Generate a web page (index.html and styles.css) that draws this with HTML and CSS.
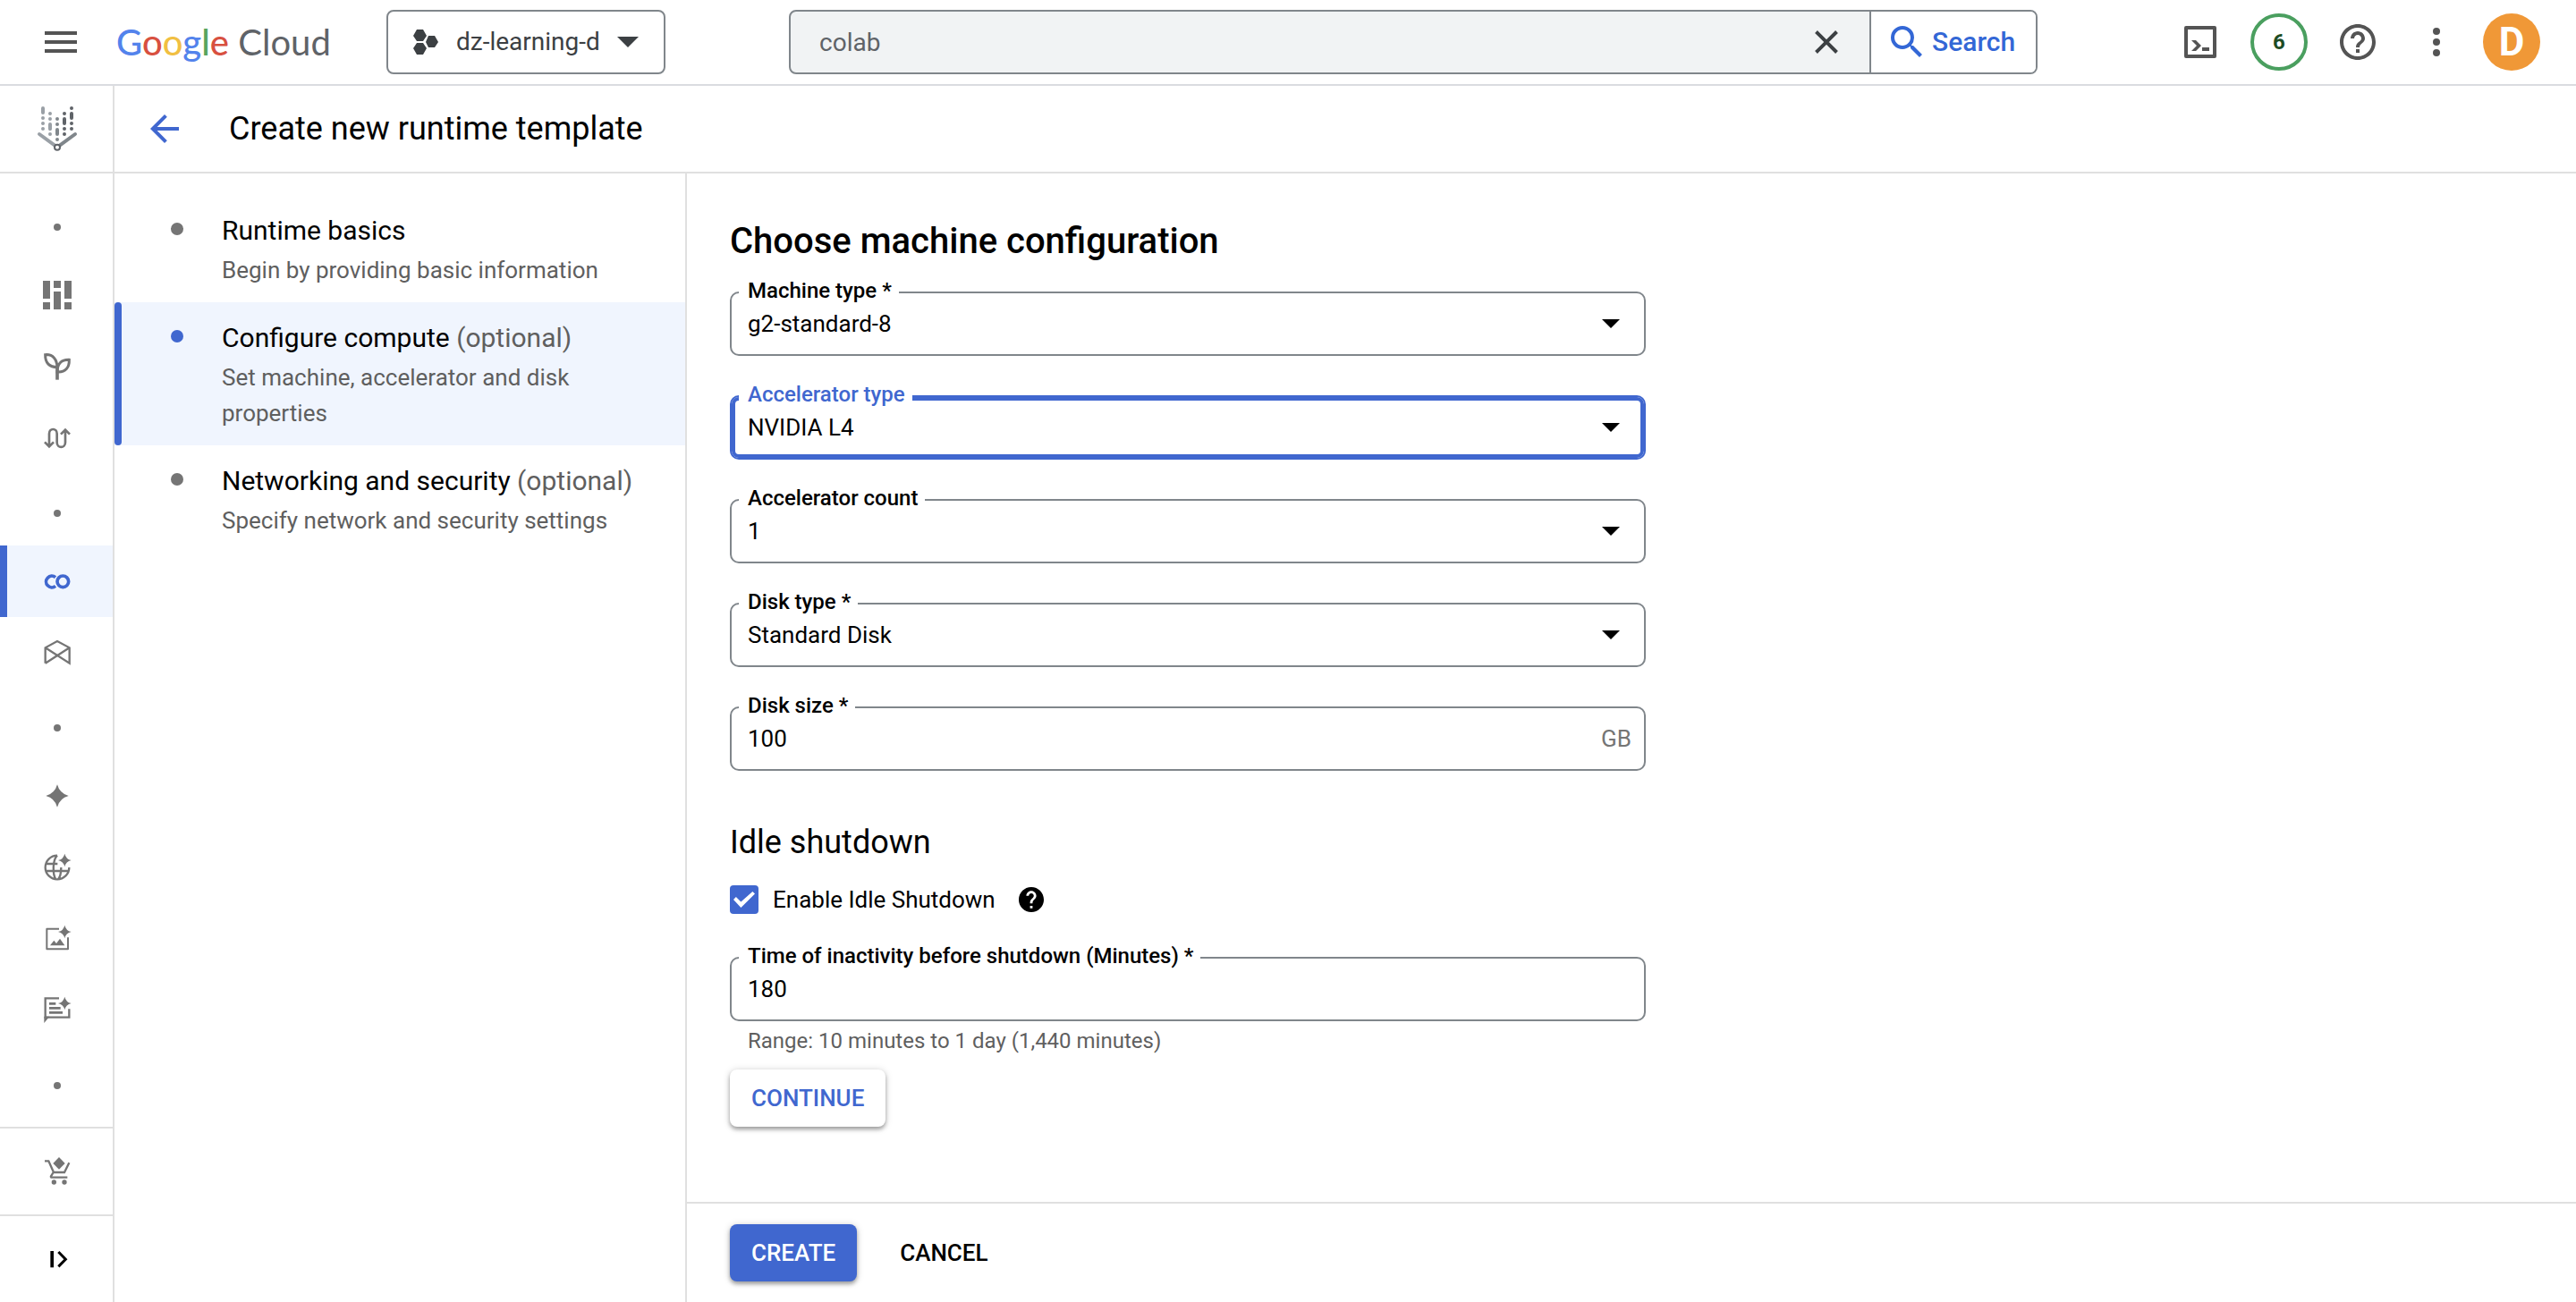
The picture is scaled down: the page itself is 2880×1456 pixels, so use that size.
FILE: index.html
```html
<!DOCTYPE html>
<html lang="en">
<head>
<meta charset="utf-8">
<title>Create new runtime template</title>
<meta name="viewport" content="width=device-width, initial-scale=1">
<link rel="stylesheet" href="styles.css">
</head>
<body>
<header class="topbar">
  <button class="icon-btn menu-btn" type="button" aria-label="Navigation menu">
    <svg class="icon-48" viewBox="0 0 24 24"><path d="M3 18h18v-2H3v2zm0-5h18v-2H3v2zm0-7v2h18V6H3z"/></svg>
  </button>
  <a class="logo" href="#"><span class="logo-google"><span class="g-blue">G</span><span class="g-red">o</span><span class="g-yellow">o</span><span class="g-blue">g</span><span class="g-green">l</span><span class="g-red">e</span></span> <span class="logo-cloud">Cloud</span></a>
  <button class="project" type="button">
    <svg class="project-icon" viewBox="0 0 28 28"><path d="M4 0h7l4 7-4 6H4L0 7zM4 15h7l4 6-4 7H4l-4-7zM17 7h7l4 7-4 6h-7l-3-6z"/></svg>
    <span>dz-learning-d</span>
    <svg class="project-caret" viewBox="0 0 24 12"><path d="M0 0h24L12 12z"/></svg>
  </button>
  <form class="search" role="search">
    <input class="search-input" type="text" value="colab" aria-label="Search">
    <button class="search-clear" type="button" aria-label="Clear search">
      <svg class="icon-32" viewBox="0 0 32 32"><path d="M4.500 4.500l23 23M27.500 4.500l-23 23" fill="none" stroke="currentColor" stroke-width="4"/></svg>
    </button>
    <button class="search-submit" type="button">
      <svg class="icon-48" viewBox="0 0 24 24"><path d="M15.500 14h-.79l-.28-.27A6.470 6.470 0 0 0 16 9.500 6.500 6.500 0 1 0 9.500 16c1.610 0 3.090-.59 4.230-1.570l.27.28v.79l5 4.990L20.490 19l-4.990-5zm-6 0C7.010 14 5 11.990 5 9.500S7.010 5 9.500 5 14 7.010 14 9.500 11.990 14 9.500 14z"/></svg>
      <span>Search</span>
    </button>
  </form>
  <div class="tools">
    <button class="icon-btn" type="button" aria-label="Cloud Shell">
      <svg class="icon-36" viewBox="0 0 36 36"><path d="M2 2h32v32H2z" fill="none" stroke="currentColor" stroke-width="4" stroke-linejoin="round"/><path d="M8 16h5l6 6-6 6H8l6-6zM20 24h8v4h-8z"/></svg>
    </button>
    <button class="notices" type="button">6</button>
    <button class="icon-btn" type="button" aria-label="Help">
      <svg class="icon-48" viewBox="0 0 24 24"><path d="M11 18h2v-2h-2v2zm1-16C6.480 2 2 6.480 2 12s4.480 10 10 10 10-4.480 10-10S17.520 2 12 2zm0 18c-4.410 0-8-3.590-8-8s3.590-8 8-8 8 3.590 8 8-3.590 8-8 8zm0-14c-2.210 0-4 1.790-4 4h2c0-1.100.9-2 2-2s2 .9 2 2c0 2-3 1.750-3 5h2c0-2.250 3-2.500 3-5 0-2.210-1.790-4-4-4z"/></svg>
    </button>
    <button class="icon-btn" type="button" aria-label="More options">
      <svg class="icon-32" viewBox="0 0 32 32"><circle cx="16" cy="4" r="4"/><circle cx="16" cy="16" r="4"/><circle cx="16" cy="28" r="4"/></svg>
    </button>
    <button class="avatar" type="button">D</button>
  </div>
</header>

<div class="shell">
  <nav class="rail" aria-label="Vertex AI">
    <a class="rail-product" href="#" aria-label="Vertex AI">
      <svg class="vertex" viewBox="60 321 144 162" fill="none" stroke-width="12" stroke-linecap="round">
        <path stroke="#9aa0a6" d="M84 333v15M84 366v0M84 384v0M84 402v0M108 351v0M108 369v0M108 387v16M108 420v0M72 420l60 44"/>
        <path stroke="#80868b" d="M132 369v0M132 387v0M132 405v15M132 438v0M192 420l-60 44"/>
        <path stroke="#5f6368" d="M156 351v0M156 369v15M156 402v0M156 420v0M180 333v0M180 351v15M180 384v0M180 402v0"/>
        <circle cx="132" cy="464" r="9" fill="#fff" stroke="#5f6368" stroke-width="6"/>
      </svg>
    </a>
    <div class="rail-list">
      <span class="rail-dot"></span>
      <a class="rail-item" href="#" aria-label="Dashboard"><svg class="icon-40" viewBox="132 360 120 120"><path d="M144 372h24v60h-24zM144 444h24v24h-24zM180 372h24v24h-24zM180 408h24v60h-24zM216 372h24v60h-24zM216 444h24v24h-24z"/></svg></a>
      <a class="rail-item" href="#" aria-label="Model Garden"><svg class="icon-40 line" viewBox="132 600 120 120"><path stroke-width="9" d="M152 620C178 618 191 636 192 662C166 662 151 648 152 620zM232 637C206 636 192 650 192 678C220 680 233 662 232 637z"/><path stroke-width="11" d="M192 656v48"/></svg></a>
      <a class="rail-item" href="#" aria-label="Pipelines"><svg class="icon-40 line" viewBox="132 838 120 120"><path stroke-width="8" d="M165 926V883C165 863 191 863 191 883V912C191 933 219 933 219 912V870M150 911l15 15 15-15M204 885l15-15 15 15"/></svg></a>
      <span class="rail-dot"></span>
      <a class="rail-item is-active" href="#" aria-label="Colab Enterprise"><svg class="icon-40 line" viewBox="132 1322 120 120"><circle cx="211" cy="1383" r="19" stroke-width="11"/><path stroke-width="11" d="M186 1369A19 19 0 1 0 186 1398"/></svg></a>
      <a class="rail-item" href="#" aria-label="Workbench"><svg class="icon-40 line" viewBox="132 90 120 120"><path stroke-width="7" d="M152 185V133L192 111L233 133V185L152 133M152 185L233 133"/></svg></a>
      <span class="rail-dot"></span>
      <a class="rail-item" href="#" aria-label="Overview"><svg class="icon-40" viewBox="132 570 120 120"><path d="M192 592Q200 622 230 630Q200 638 192 668Q184 638 154 630Q184 622 192 592z"/></svg></a>
      <a class="rail-item" href="#" aria-label="Language"><svg class="icon-40" viewBox="132 810 120 120"><path fill="none" stroke="currentColor" stroke-width="7" d="M192 830A40 40 0 1 0 232 870M155 858H193M154 882H231M192 830C176 845 176 893 187 910M205 870C205 886 202 902 195 910"/><path d="M217 824Q221 842 239 846Q221 850 217 868Q213 850 195 846Q213 842 217 824z"/></svg></a>
      <a class="rail-item" href="#" aria-label="Vision"><svg class="icon-40" viewBox="132 1050 120 120"><path fill="none" stroke="currentColor" stroke-width="6" stroke-linejoin="round" d="M198 1076H157V1144H228V1105"/><path d="M168 1132l13-17 8 10 12-16 16 23zM217 1064Q221 1082 239 1086Q221 1090 217 1108Q213 1090 195 1086Q213 1082 217 1064z"/></svg></a>
      <a class="rail-item" href="#" aria-label="Speech"><svg class="icon-40" viewBox="132 1290 120 120"><path fill="none" stroke="currentColor" stroke-width="7" d="M198 1309H152V1373H232V1345"/><path d="M148 1370h18l-18 22zM165 1323h22v8h-22zM165 1338h38v8h-38zM165 1353h45v8h-45zM217 1304Q221 1322 239 1326Q221 1330 217 1348Q213 1330 195 1326Q213 1322 217 1304z"/></svg></a>
      <span class="rail-dot"></span>
    </div>
    <a class="rail-foot" href="#" aria-label="Marketplace"><svg class="icon-40" viewBox="132 360 120 120"><path fill="none" stroke="currentColor" stroke-width="7" d="M150 385h13l17 38h36l16-32M179 423l-8 13q-2 4 4 4h51"/><circle cx="181" cy="456" r="8"/><circle cx="216" cy="456" r="8"/><path d="M198 372l20 21-20 20-20-20z"/></svg></a>
    <button class="rail-foot rail-toggle" type="button" aria-label="Expand menu"><svg class="icon-40" viewBox="132 654 120 120"><path d="M169 687h11v55h-11z"/><path fill="none" stroke="currentColor" stroke-width="9" d="M196 690l24 25-24 24"/></svg></button>
  </nav>

  <div class="page">
    <div class="titlebar">
      <a class="back" href="#" aria-label="Back"><svg class="icon-48" viewBox="0 0 24 24"><path d="M20 11H7.830l5.590-5.590L12 4l-8 8 8 8 1.410-1.410L7.830 13H20v-2z"/></svg></a>
      <h1 class="page-title">Create new runtime template</h1>
    </div>
    <div class="columns">
      <nav class="steps" aria-label="Steps">
        <a class="step" href="#">
          <span class="step-title">Runtime basics</span>
          <span class="step-desc">Begin by providing basic information</span>
        </a>
        <a class="step is-active" href="#">
          <span class="step-title">Configure compute <span class="optional">(optional)</span></span>
          <span class="step-desc">Set machine, accelerator and disk properties</span>
        </a>
        <a class="step" href="#">
          <span class="step-title">Networking and security <span class="optional">(optional)</span></span>
          <span class="step-desc">Specify network and security settings</span>
        </a>
      </nav>
      <main class="main">
        <form class="form">
          <h2 class="form-title">Choose machine configuration</h2>
          <div class="fields">
            <div class="field">
              <label class="field-label" for="machine">Machine type *</label>
              <select class="field-control" id="machine"><option>g2-standard-8</option></select>
              <svg class="field-caret" viewBox="0 0 20 10"><path d="M0 0h20L10 10z"/></svg>
            </div>
            <div class="field is-focused">
              <label class="field-label" for="accel">Accelerator type</label>
              <select class="field-control" id="accel"><option>NVIDIA L4</option></select>
              <svg class="field-caret" viewBox="0 0 20 10"><path d="M0 0h20L10 10z"/></svg>
            </div>
            <div class="field">
              <label class="field-label" for="count">Accelerator count</label>
              <select class="field-control" id="count"><option>1</option></select>
              <svg class="field-caret" viewBox="0 0 20 10"><path d="M0 0h20L10 10z"/></svg>
            </div>
            <div class="field">
              <label class="field-label" for="disk">Disk type *</label>
              <select class="field-control" id="disk"><option>Standard Disk</option></select>
              <svg class="field-caret" viewBox="0 0 20 10"><path d="M0 0h20L10 10z"/></svg>
            </div>
            <div class="field">
              <label class="field-label" for="size">Disk size *</label>
              <input class="field-control" id="size" type="text" value="100">
              <span class="field-unit">GB</span>
            </div>
          </div>
          <h3 class="section-title">Idle shutdown</h3>
          <div class="check-row">
            <input class="check" id="idle" type="checkbox" checked>
            <label for="idle">Enable Idle Shutdown</label>
            <button class="icon-btn hint-btn" type="button" aria-label="About idle shutdown"><svg class="icon-28" viewBox="2 2 20 20"><path d="M12 2C6.480 2 2 6.480 2 12s4.480 10 10 10 10-4.480 10-10S17.520 2 12 2zm1 17h-2v-2h2v2zm2.070-7.750l-.9.920C13.450 12.900 13 13.500 13 15h-2v-.5c0-1.100.45-2.100 1.170-2.830l1.240-1.260c.37-.36.59-.86.59-1.410 0-1.100-.9-2-2-2s-2 .9-2 2H8c0-2.210 1.790-4 4-4s4 1.790 4 4c0 .88-.36 1.680-.93 2.250z"/></svg></button>
          </div>
          <div class="field">
            <label class="field-label" for="time">Time of inactivity before shutdown (Minutes) *</label>
            <input class="field-control" id="time" type="text" value="180">
          </div>
          <p class="field-hint">Range: 10 minutes to 1 day (1,440 minutes)</p>
          <button class="btn btn-raised" type="button">CONTINUE</button>
        </form>
        <div class="actions">
          <button class="btn btn-primary" type="button">CREATE</button>
          <button class="btn btn-text" type="button">CANCEL</button>
        </div>
      </main>
    </div>
  </div>
</div>
</body>
</html>
```

FILE: styles.css
```css
:root {
  --blue: #4067cf;
  --tint: #f0f5fe;
  --line: #e0e0e0;
  --outline: #80868b;
  --muted: #5f5f5f;
}

*, *::before, *::after { box-sizing: border-box; }

body {
  margin: 0;
  min-height: 100vh;
  display: flex;
  flex-direction: column;
  background: #fff;
  color: #000;
  font-family: Roboto, "Liberation Sans", sans-serif;
  font-size: 26px;
  line-height: 32px;
}

h1, h2, h3, p { margin: 0; font-weight: 400; }
a { color: inherit; text-decoration: none; }
button, input, select { font: inherit; color: inherit; margin: 0; }
button { border: 0; padding: 0; background: none; cursor: pointer; }
svg { display: block; flex: none; fill: currentColor; }

.icon-28 { width: 28px; height: 28px; }
.icon-32 { width: 32px; height: 32px; }
.icon-36 { width: 36px; height: 36px; }
.icon-40 { width: 40px; height: 40px; }
.icon-48 { width: 48px; height: 48px; }
.line { fill: none; stroke: currentColor; }
.icon-btn { display: flex; align-items: center; justify-content: center; }

/* Top bar */
.topbar {
  display: flex;
  align-items: center;
  height: 96px;
  padding: 0 40px 0 44px;
  border-bottom: 2px solid #dadce0;
  color: #545454;
}
.logo {
  width: 264px;
  margin: 0 38px;
  flex: none;
  font-family: Lato, "Liberation Sans", sans-serif;
  font-size: 40px;
  line-height: 48px;
  white-space: nowrap;
  color: #5f6368;
}
.logo-google { font-weight: 500; }
.g-blue { color: #5383ec; }
.g-red { color: #d85040; }
.g-yellow { color: #f1bf42; }
.g-green { color: #58a55c; }
.project {
  display: flex;
  align-items: center;
  flex: none;
  width: 312px;
  height: 72px;
  padding: 0 28px;
  border: 2px solid var(--outline);
  border-radius: 8px;
  color: #3c4043;
  font-size: 28px;
}
.project-icon { width: 28px; height: 28px; margin-right: 20px; }
.project-caret { width: 24px; height: 12px; margin-left: auto; }
.search {
  display: flex;
  flex: 0 1 1396px;
  min-width: 0;
  height: 72px;
  margin-left: 138px;
  border: 2px solid var(--outline);
  border-radius: 8px;
  overflow: hidden;
  background: #f1f3f4;
  font-size: 28px;
}
.search-input {
  flex: 1;
  min-width: 0;
  padding: 2px 32px 0;
  border: 0;
  outline: 0;
  background: none;
  color: #5f6368;
}
.search-clear { width: 96px; display: flex; align-items: center; justify-content: center; color: #3c4043; }
.search-submit {
  display: flex;
  align-items: center;
  gap: 4px;
  width: 186px;
  padding-left: 16px;
  border-left: 2px solid var(--outline);
  background: #fff;
  color: #3367d6;
  font-size: 30px;
  font-weight: 500;
}
.tools { display: flex; align-items: center; margin-left: auto; }
.tools > :nth-child(2) { margin-left: 38px; }
.tools > :nth-child(3) { margin-left: 32px; }
.tools > :nth-child(4) { margin-left: 48px; }
.tools > :nth-child(5) { margin-left: 36px; }
.notices, .avatar { width: 64px; height: 64px; border-radius: 50%; font-weight: 700; }
.notices { border: 4px solid #4a9f5f; color: #1e4c25; font-size: 24px; }
.avatar { background: #f09837; color: #fff; font-size: 44px; }

/* Product rail */
.shell { display: flex; flex: 1; }
.rail {
  display: flex;
  flex-direction: column;
  flex: none;
  width: 128px;
  border-right: 2px solid var(--line);
  color: #757575;
}
.rail-product {
  display: flex;
  align-items: center;
  justify-content: center;
  height: 98px;
  padding: 0 0 0 2px;
  border-bottom: 2px solid var(--line);
}
.vertex { width: 48px; height: 54px; }
.rail-list { display: flex; flex-direction: column; flex: 1; padding-top: 16px; }
.rail-item, .rail-dot {
  display: flex;
  align-items: center;
  justify-content: center;
  height: 80px;
  padding-left: 2px;
}
.rail-dot { padding-top: 8px; }
.rail-dot::before {
  content: "";
  width: 8px;
  height: 8px;
  border-radius: 50%;
  background: currentColor;
}
.rail-item.is-active {
  background: var(--tint);
  box-shadow: inset 8px 0 var(--blue);
  color: var(--blue);
}
.rail-foot {
  display: flex;
  align-items: center;
  justify-content: center;
  height: 98px;
  padding-left: 2px;
  border-top: 2px solid var(--line);
}
.rail-toggle { color: #000; }

/* Page */
.page { display: flex; flex-direction: column; flex: 1; min-width: 0; }
.titlebar {
  display: flex;
  align-items: center;
  gap: 48px;
  height: 98px;
  padding-left: 32px;
  border-bottom: 2px solid var(--line);
}
.back { color: var(--blue); }
.page-title { font-size: 36px; line-height: 48px; }
.columns { display: flex; flex: 1; }

/* Stepper */
.steps {
  flex: none;
  width: 640px;
  padding-top: 24px;
  border-right: 2px solid var(--line);
}
.step {
  display: block;
  position: relative;
  padding: 20px 56px 16px 120px;
  line-height: 40px;
}
.step::before {
  content: "";
  position: absolute;
  left: 63px;
  top: 31px;
  width: 14px;
  height: 14px;
  border-radius: 50%;
  background: #757575;
}
.step-title { display: block; margin-bottom: 4px; font-size: 30px; }
.step-desc { display: block; color: var(--muted); }
.optional { color: var(--muted); }
.step.is-active { background: var(--tint); }
.step.is-active::before { background: var(--blue); }
.step.is-active::after {
  content: "";
  position: absolute;
  left: 0;
  top: 0;
  bottom: 0;
  width: 8px;
  border-radius: 4px;
  background: var(--blue);
}

/* Form */
.main { display: flex; flex-direction: column; flex: 1; min-width: 0; }
.form { flex: 1; width: 100%; max-width: 1120px; padding: 52px 48px; }
.form-title { margin-bottom: 32px; font-size: 40px; line-height: 48px; font-weight: 500; }
.fields { display: grid; gap: 44px; }
.field {
  display: flex;
  align-items: center;
  position: relative;
  height: 72px;
  border: 2px solid var(--outline);
  border-radius: 10px;
}
.field.is-focused { border-color: var(--blue); box-shadow: inset 0 0 0 4px var(--blue); }
.field-label {
  position: absolute;
  left: 8px;
  top: -19px;
  padding: 0 8px 0 10px;
  background: #fff;
  font-size: 24px;
  font-weight: 500;
}
.is-focused .field-label { color: var(--blue); }
.field-control {
  flex: 1;
  min-width: 0;
  width: 100%;
  height: 68px;
  padding: 0 18px;
  border: 0;
  outline: 0;
  background: none;
  appearance: none;
}
.field-caret {
  position: absolute;
  right: 27px;
  top: 29px;
  width: 20px;
  height: 10px;
  pointer-events: none;
}
.field-unit { padding-right: 14px; color: #757575; }
.field-hint { margin: 8px 20px 18px; color: var(--muted); font-size: 24px; line-height: 28px; }
.section-title { margin: 56px 0 24px; font-size: 36px; line-height: 48px; }
.check-row { display: flex; align-items: center; gap: 16px; margin-bottom: 48px; }
.check {
  flex: none;
  width: 32px;
  height: 32px;
  border-radius: 4px;
  appearance: none;
  background: var(--blue);
  display: grid;
  place-items: center;
}
.check:checked::before {
  content: "";
  width: 24px;
  height: 18px;
  background: #fff;
  clip-path: polygon(0 50%, 12% 34%, 35% 64%, 89% 0, 100% 14%, 35% 100%);
}
.hint-btn { margin-left: 10px; }

.btn {
  height: 64px;
  padding: 0 24px;
  border-radius: 8px;
  font-size: 26px;
  font-weight: 500;
}
.btn-raised { color: var(--blue); box-shadow: 0 3px 4px rgba(0, 0, 0, .3), 0 1px 8px rgba(0, 0, 0, .18); }
.btn-primary { background: var(--blue); color: #fff; box-shadow: 0 3px 4px rgba(0, 0, 0, .3), 0 1px 8px rgba(0, 0, 0, .18); }
.actions {
  display: flex;
  align-items: center;
  gap: 24px;
  min-height: 112px;
  padding: 0 48px;
  border-top: 2px solid var(--line);
}
```
